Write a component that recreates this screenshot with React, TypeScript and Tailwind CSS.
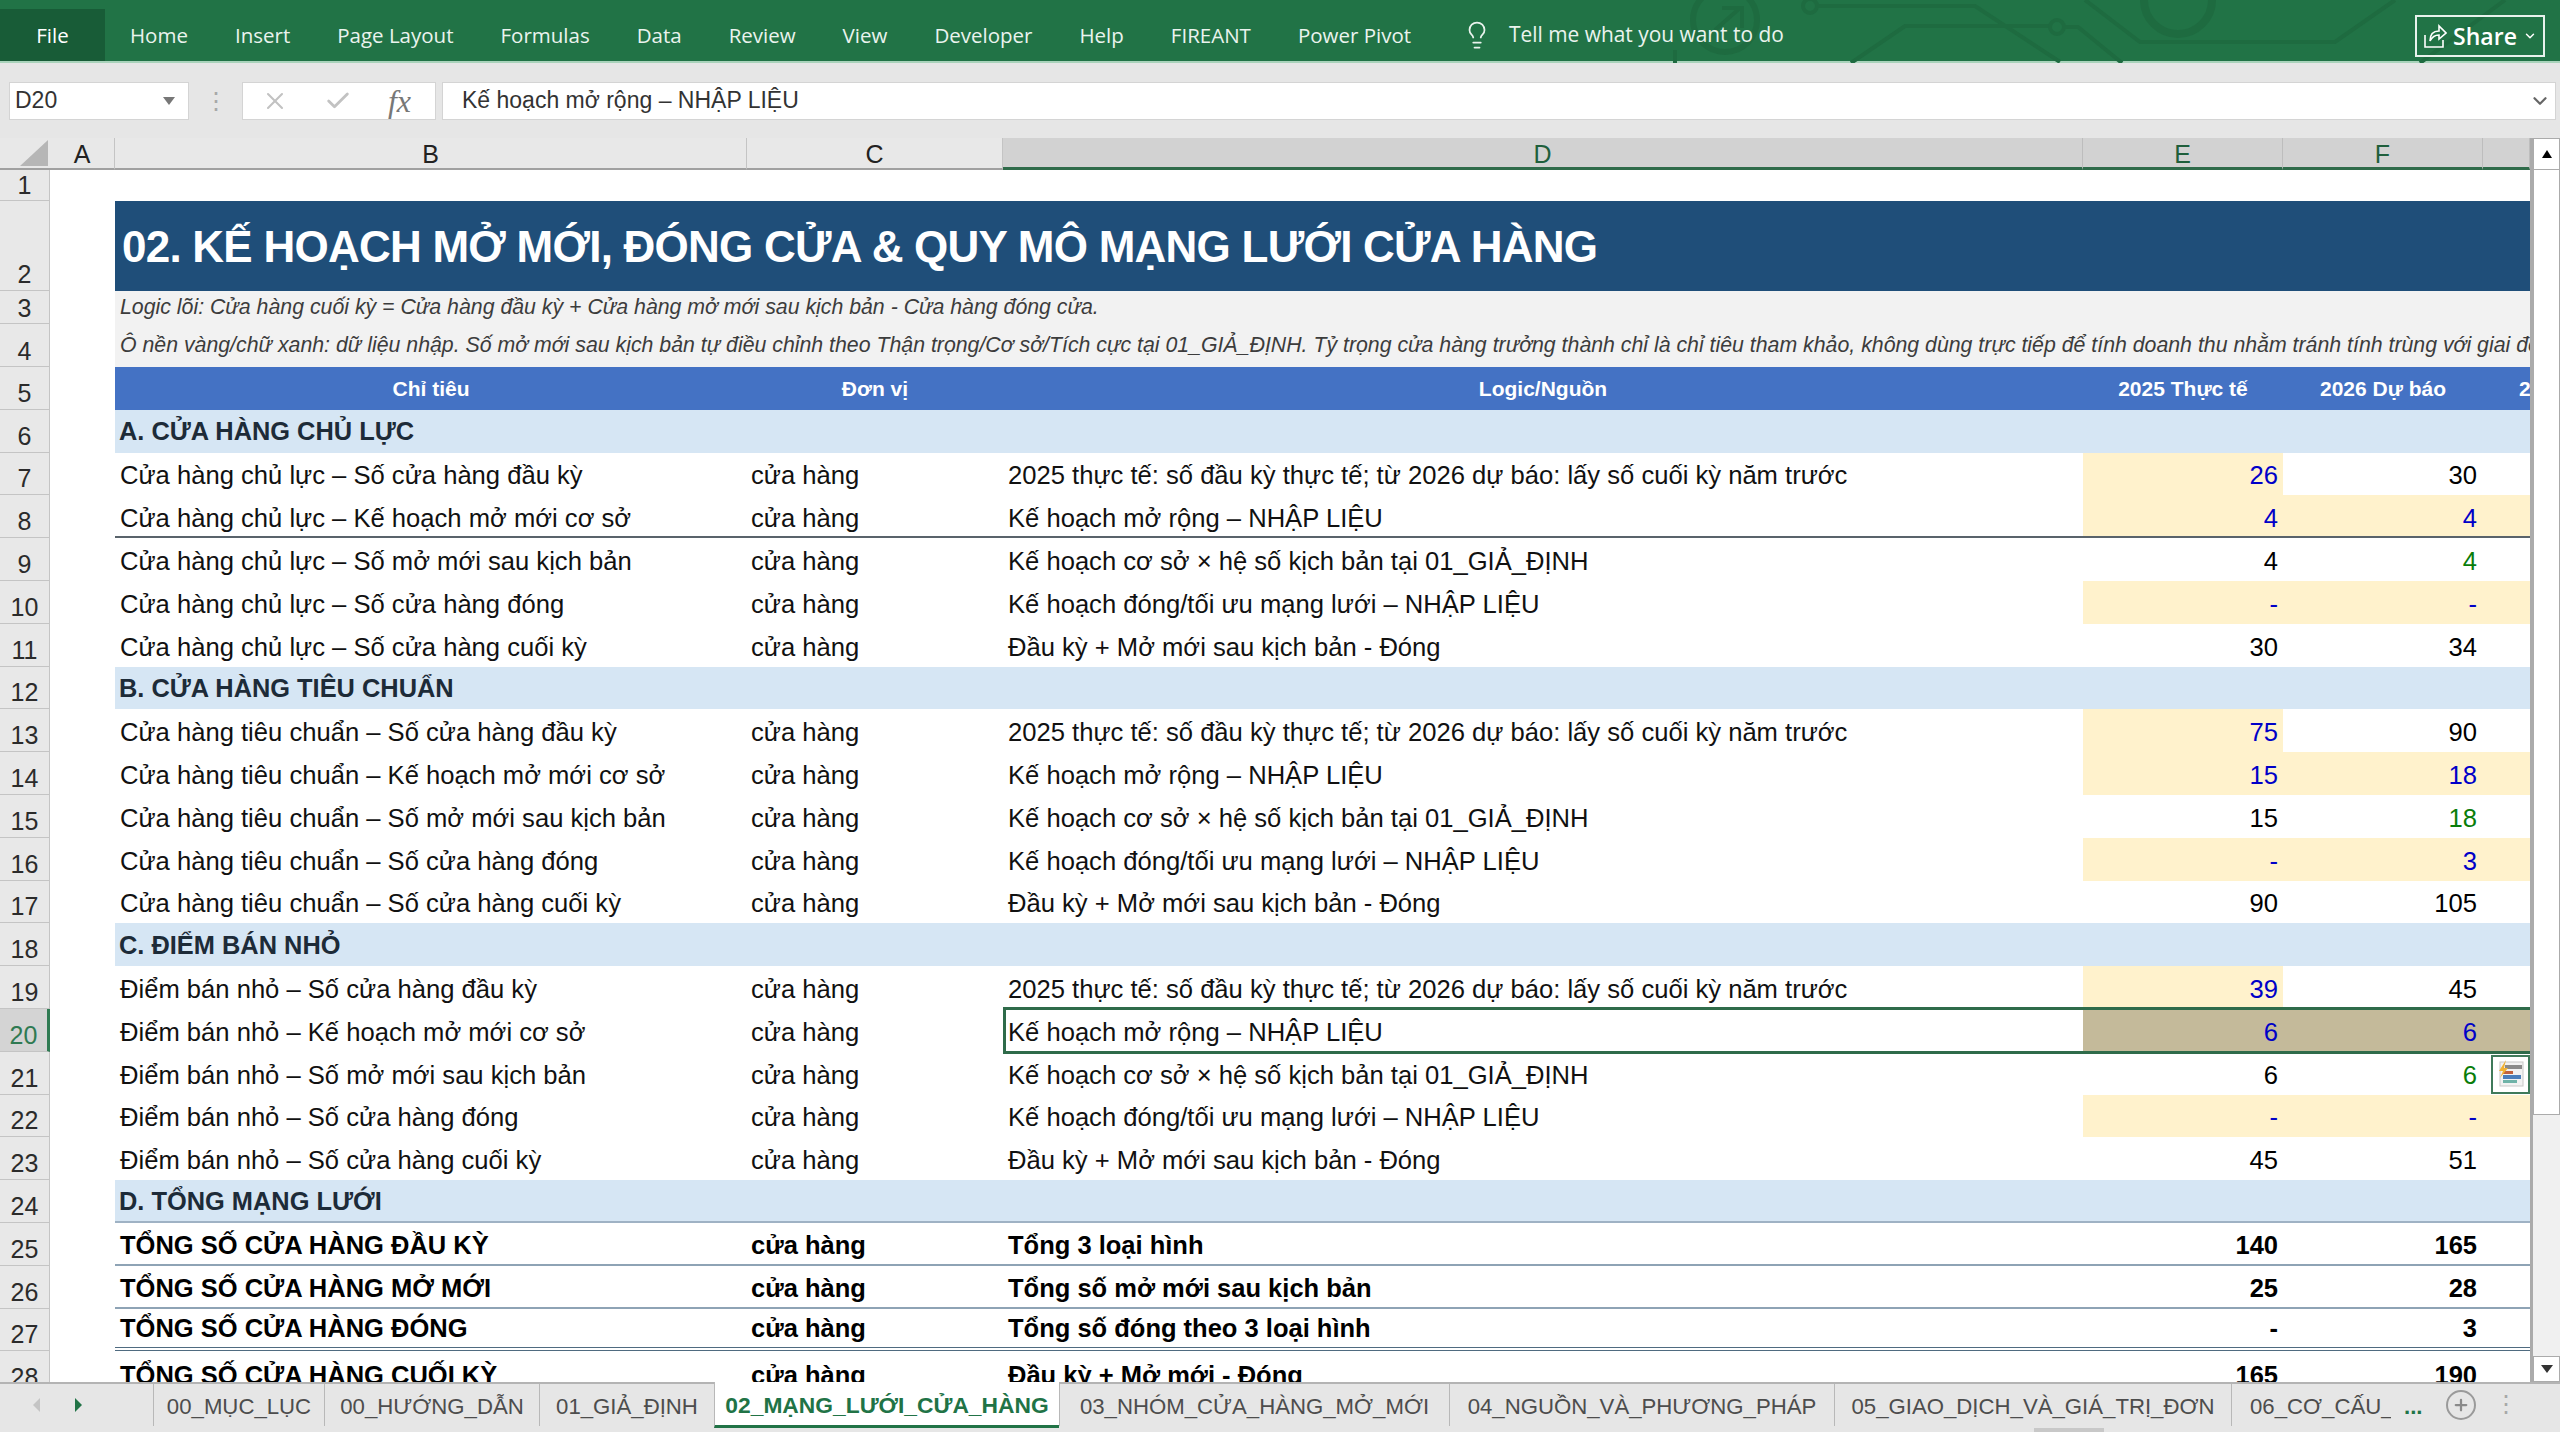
import React from "react";
import { Check, ChevronDown, Lightbulb, Plus, X } from "lucide-react";

type Val = { v: string; k?: "in" | "green" | "sel" };
type DataRow = { n: number; b: string; d: string; e: Val; f: Val; fill?: boolean };

const gridCols = "grid grid-cols-[50px_65px_632px_256px_1080px_200px_200px_47px]";
const rowH = "h-[42.8px] shrink-0";

const tabsRibbon = ["Home", "Insert", "Page Layout", "Formulas", "Data", "Review", "View", "Developer", "Help", "FIREANT", "Power Pivot"];

const sheetTabs = [
  { name: "00_MỤC_LỤC", w: "w-[171px]" },
  { name: "00_HƯỚNG_DẪN", w: "w-[215px]" },
  { name: "01_GIẢ_ĐỊNH", w: "w-[175px]" },
  { name: "02_MẠNG_LƯỚI_CỬA_HÀNG", w: "w-[345px]", active: true },
  { name: "03_NHÓM_CỬA_HÀNG_MỞ_MỚI", w: "w-[390px]" },
  { name: "04_NGUỒN_VÀ_PHƯƠNG_PHÁP", w: "w-[385px]" },
  { name: "05_GIAO_DỊCH_VÀ_GIÁ_TRỊ_ĐƠN", w: "w-[397px]" },
];

const group = (prefix: string, start: number, vals: [Val, Val][]): DataRow[] => [
  { n: start, b: `${prefix} – Số cửa hàng đầu kỳ`, d: "2025 thực tế: số đầu kỳ thực tế; từ 2026 dự báo: lấy số cuối kỳ năm trước", e: vals[0][0], f: vals[0][1] },
  { n: start + 1, b: `${prefix} – Kế hoạch mở mới cơ sở`, d: "Kế hoạch mở rộng – NHẬP LIỆU", e: vals[1][0], f: vals[1][1] },
  { n: start + 2, b: `${prefix} – Số mở mới sau kịch bản`, d: "Kế hoạch cơ sở × hệ số kịch bản tại 01_GIẢ_ĐỊNH", e: vals[2][0], f: vals[2][1] },
  { n: start + 3, b: `${prefix} – Số cửa hàng đóng`, d: "Kế hoạch đóng/tối ưu mạng lưới – NHẬP LIỆU", e: vals[3][0], f: vals[3][1] },
  { n: start + 4, b: `${prefix} – Số cửa hàng cuối kỳ`, d: "Đầu kỳ + Mở mới sau kịch bản - Đóng", e: vals[4][0], f: vals[4][1] },
];

const groupA = group("Cửa hàng chủ lực", 7, [
  [{ v: "26", k: "in" }, { v: "30" }],
  [{ v: "4", k: "in" }, { v: "4", k: "in" }],
  [{ v: "4" }, { v: "4", k: "green" }],
  [{ v: "-", k: "in" }, { v: "-", k: "in" }],
  [{ v: "30" }, { v: "34" }],
]);
const groupB = group("Cửa hàng tiêu chuẩn", 13, [
  [{ v: "75", k: "in" }, { v: "90" }],
  [{ v: "15", k: "in" }, { v: "18", k: "in" }],
  [{ v: "15" }, { v: "18", k: "green" }],
  [{ v: "-", k: "in" }, { v: "3", k: "in" }],
  [{ v: "90" }, { v: "105" }],
]);
const groupC = group("Điểm bán nhỏ", 19, [
  [{ v: "39", k: "in" }, { v: "45" }],
  [{ v: "6", k: "sel" }, { v: "6", k: "sel" }],
  [{ v: "6" }, { v: "6", k: "green" }],
  [{ v: "-", k: "in" }, { v: "-", k: "in" }],
  [{ v: "45" }, { v: "51" }],
]);

const totals = [
  { n: 25, b: "TỔNG SỐ CỬA HÀNG ĐẦU KỲ", d: "Tổng 3 loại hình", e: "140", f: "165", line: "border-b-2 border-[#8ea3b5]" },
  { n: 26, b: "TỔNG SỐ CỬA HÀNG MỞ MỚI", d: "Tổng số mở mới sau kịch bản", e: "25", f: "28", line: "border-b-2 border-[#8ea3b5]" },
  { n: 27, b: "TỔNG SỐ CỬA HÀNG ĐÓNG", d: "Tổng số đóng theo 3 loại hình", e: "-", f: "3", line: "border-b-[4px] border-double border-[#4f6b80]" },
  { n: 28, b: "TỔNG SỐ CỬA HÀNG CUỐI KỲ", d: "Đầu kỳ + Mở mới - Đóng", e: "165", f: "190", line: "" },
];

const valueBg = (k?: Val["k"]) => (k === "in" ? "bg-[#fff2cc]" : k === "sel" ? "bg-[#c4ba9a]" : "bg-white");
const valueText = (k?: Val["k"]) => (k === "in" || k === "sel" ? "text-[#0000c8]" : k === "green" ? "text-[#0a7d0a]" : "text-black");

const RowNum = ({ n, selected, className = "" }: { n: number; selected?: boolean; className?: string }) => (
  <div
    className={`flex items-end justify-center pb-[1px] font-normal text-[25px] leading-[30px] border-b border-[#c4c4c4] ${
      selected ? "bg-[#d4d4d4] text-[#2f7a52] border-r-[3px] border-r-[#2f7a52]" : "bg-[#e8e8e8] text-[#2b2b2b] border-r border-r-[#c4c4c4]"
    } ${className}`}
  >
    {n}
  </div>
);

const ValueCell = ({ val, pr }: { val: Val; pr: string }) => (
  <div className={`flex items-end justify-end pb-[5px] ${pr} ${valueBg(val.k)} ${valueText(val.k)}`}>{val.v}</div>
);

const BodyRow = ({ row }: { row: DataRow }) => {
  const selected = row.n === 20;
  return (
    <div className={`${gridCols} ${rowH} relative text-[25.6px] leading-[30px] text-[#111]`}>
      <RowNum n={row.n} selected={selected} />
      <div className="bg-white" />
      <div className="flex items-end pb-[5px] pl-[5px] whitespace-nowrap bg-white">{row.b}</div>
      <div className="flex items-end pb-[5px] pl-[4px] bg-white">cửa hàng</div>
      <div className="flex items-end pb-[5px] pl-[5px] whitespace-nowrap bg-white">{row.d}</div>
      <ValueCell val={row.e} pr="pr-[5px]" />
      <ValueCell val={row.f} pr="pr-[6px]" />
      <div className={row.f.k === "in" || row.f.k === "sel" ? valueBg(row.f.k) : "bg-white"} />
      {row.n === 8 && <div className="absolute left-[115px] right-0 bottom-0 h-[2px] bg-[#59636b]" />}
      {selected && <div className="absolute col-start-5 col-end-9 row-start-1 inset-x-0 top-[-2px] bottom-[-2px] border-[3px] border-r-0 border-[#2f6b4a] z-10" />}
      {row.n === 21 && (
        <div className="absolute right-0 top-[3px] w-[39px] h-[39px] border-2 border-[#3f7a5a] bg-white flex items-center justify-center z-10">
          <svg width="28" height="28" viewBox="0 0 28 28">
            <rect x="3" y="2" width="23" height="24" fill="#f2f2f2" stroke="#c8c8c8" />
            <rect x="8" y="5" width="17" height="4" fill="#8a8a8a" />
            <rect x="6" y="11" width="10" height="3" fill="#c0623f" />
            <rect x="6" y="15" width="18" height="4" fill="#4a7ebb" />
            <rect x="6" y="20" width="14" height="3" fill="#6fb3a8" />
            <path d="M9 0 L2 11 L6 11 L3 18 L11 8 L7 8 Z" fill="#f2b233" />
          </svg>
        </div>
      )}
    </div>
  );
};

const SectionRow = ({ n, title }: { n: number; title: string }) => (
  <div className={`${gridCols} ${rowH} text-[25.4px] leading-[30px] font-bold text-[#1d2b38]`}>
    <RowNum n={n} />
    <div className="bg-white" />
    <div className={`col-span-6 flex items-center pl-[4px] bg-[#d6e6f4] ${n === 24 ? "border-b-2 border-[#9fb2c4]" : ""}`}>{title}</div>
  </div>
);

const CircuitArt = () => (
  <svg className="absolute right-0 top-0 pointer-events-none" width="1000" height="63" viewBox="1560 0 1000 63" fill="none" stroke="#1e6b40" strokeWidth="4">
    <circle cx="1725" cy="20" r="32" strokeWidth="6" />
    <path d="M1715 30 L1740 8 M1722 8 H1742 V28" strokeWidth="4" />
    <circle cx="1810" cy="6" r="7" />
    <path d="M1817 6 H1975 L2060 62" />
    <path d="M1851 63 L1905 26 H2050" />
    <circle cx="2057" cy="27" r="7" />
    <path d="M2064 27 H2078 L2122 63" />
    <path d="M2085 0 L2140 42 H2335 L2395 0" />
    <circle cx="2178" cy="0" r="34" strokeWidth="8" />
    <path d="M2420 63 L2505 0" />
    <path d="M1675 63 V50" />
  </svg>
);

const App = () => (
  <div className="w-[2560px] h-[1432px] flex flex-col overflow-hidden bg-[#e6e6e6] font-['Liberation_Sans',sans-serif]">
    {/* ribbon */}
    <div className="relative h-[63px] shrink-0 bg-[#217346] border-b-2 border-[#a9d3bb] flex items-end text-white text-[20.5px] font-['Open_Sans',sans-serif]">
      <CircuitArt />
      <div className="w-[105px] h-[52px] bg-[#185c37] flex items-center justify-center">File</div>
      <div className="relative h-[52px] flex items-center gap-[47px] pl-[25px] text-[#eaf3ee]">
        {tabsRibbon.map((t) => (
          <span key={t}>{t}</span>
        ))}
        <span className="flex items-center gap-[17px] ml-[4px] text-[20.9px]">
          <Lightbulb size={30} strokeWidth={1.4} />
          <span>Tell me what you want to do</span>
        </span>
      </div>
      <div className="relative ml-auto mr-[15px] mb-[4px] w-[130px] h-[42px] border-2 border-[#e8f2ec] flex items-center justify-center gap-[6px] text-[23px] font-semibold">
        <svg width="24" height="26" viewBox="0 0 24 26" fill="none" stroke="white" strokeWidth="1.6">
          <path d="M2 12 V24 H20 V17" />
          <path d="M7 18 C7 11 11 8 16 8 V3 L23 10 L16 16 V12 C12 12 9 14 7 18 Z" />
        </svg>
        <span>Share</span>
        <ChevronDown size={14} strokeWidth={2.5} />
      </div>
    </div>

    {/* formula bar */}
    <div className="h-[75px] shrink-0 flex items-center bg-[#e6e6e6] pl-[9px] pr-[4px] text-[23px] text-[#333]">
      <div className="w-[180px] h-[38px] bg-white border border-[#d4d4d4] flex items-center justify-between pl-[5px] pr-[13px]">
        <span>D20</span>
        <span className="w-0 h-0 border-x-[6px] border-x-transparent border-t-[8px] border-t-[#777]" />
      </div>
      <div className="w-[53px] flex justify-center text-[#a8a8a8] text-[24px] leading-none">⋮</div>
      <div className="w-[194px] h-[38px] bg-white border border-[#d4d4d4] flex items-center justify-between pl-[18px] pr-[24px] text-[#c2c2c2]">
        <X size={28} strokeWidth={1.8} />
        <Check size={28} strokeWidth={2.4} />
        <span className="font-['Liberation_Serif',serif] italic text-[32px] leading-none text-[#777]">fx</span>
      </div>
      <div className="ml-[6px] flex-1 h-[38px] bg-white border border-[#d4d4d4] flex items-center justify-between pl-[19px] pr-[4px]">
        <span>Kế hoạch mở rộng – NHẬP LIỆU</span>
        <ChevronDown size={22} strokeWidth={2.4} className="text-[#666]" />
      </div>
    </div>

    {/* sheet */}
    <div className="flex-1 min-h-0 flex overflow-hidden bg-white">
      <div className="w-[2530px] shrink-0 flex flex-col overflow-hidden">
        <div className={`${gridCols} grid-rows-[32px] h-[32px] shrink-0 text-[25px] leading-[26px]`}>
          <div className="relative bg-[#e8e8e8] border-b-2 border-[#a0a0a0]">
            <svg className="absolute right-[2px] bottom-[2px]" width="28" height="26" viewBox="0 0 28 26">
              <path d="M28 0 V26 H0 Z" fill="#b6b6b6" />
            </svg>
          </div>
          {["A", "B", "C"].map((c) => (
            <div key={c} className="flex items-center justify-center pt-[2px] bg-[#e8e8e8] text-[#222] border-r border-[#c4c4c4] border-b-2 border-b-[#a0a0a0]">
              {c}
            </div>
          ))}
          {["D", "E", "F", ""].map((c, i) => (
            <div key={i} className="flex items-center justify-center pt-[2px] bg-[#d2d2d2] text-[#1f5f3c] border-r border-[#bdbdbd] border-b-[3px] border-b-[#2f6b4a]">
              {c}
            </div>
          ))}
        </div>

        <div className={`${gridCols} h-[31px] shrink-0`}>
          <RowNum n={1} className="!items-center !pb-0" />
          <div className="col-span-7 bg-white" />
        </div>
        <div className={`${gridCols} h-[90px] shrink-0`}>
          <RowNum n={2} />
          <div className="bg-white" />
          <div className="col-span-6 flex items-center pl-[7px] pt-[2px] bg-[#1f4e79] text-white font-bold text-[44px] tracking-[-0.76px] whitespace-nowrap">
            02. KẾ HOẠCH MỞ MỚI, ĐÓNG CỬA &amp; QUY MÔ MẠNG LƯỚI CỬA HÀNG
          </div>
        </div>
        <div className={`${gridCols} h-[33px] shrink-0`}>
          <RowNum n={3} className="!pb-0" />
          <div className="bg-white" />
          <div className="col-span-6 flex items-center pl-[5px] bg-[#f2f2f2] italic text-[21.3px] text-[#3c3c3c] whitespace-nowrap overflow-hidden">
            Logic lõi: Cửa hàng cuối kỳ = Cửa hàng đầu kỳ + Cửa hàng mở mới sau kịch bản - Cửa hàng đóng cửa.
          </div>
        </div>
        <div className={`${gridCols} h-[43px] shrink-0`}>
          <RowNum n={4} className="!pb-0" />
          <div className="bg-white" />
          <div className="col-span-6 flex items-center pl-[5px] bg-[#f2f2f2] italic text-[21.3px] text-[#3c3c3c] whitespace-nowrap overflow-hidden">
            Ô nền vàng/chữ xanh: dữ liệu nhập. Số mở mới sau kịch bản tự điều chỉnh theo Thận trọng/Cơ sở/Tích cực tại 01_GIẢ_ĐỊNH. Tỷ trọng cửa hàng trưởng thành chỉ là chỉ tiêu tham khảo, không dùng trực tiếp để tính doanh thu nhằm tránh tính trùng với giai đoạn
          </div>
        </div>
        <div className={`${gridCols} ${rowH} text-[21px] font-bold text-white`}>
          <RowNum n={5} />
          <div className="bg-white" />
          {["Chỉ tiêu", "Đơn vị", "Logic/Nguồn", "2025 Thực tế", "2026 Dự báo"].map((h) => (
            <div key={h} className="flex items-center justify-center bg-[#4472c4] whitespace-nowrap">
              {h}
            </div>
          ))}
          <div className="flex items-center pl-[36px] bg-[#4472c4] overflow-hidden whitespace-nowrap">2027</div>
        </div>

        <SectionRow n={6} title="A. CỬA HÀNG CHỦ LỰC" />
        {groupA.map((r) => (
          <BodyRow key={r.n} row={r} />
        ))}
        <SectionRow n={12} title="B. CỬA HÀNG TIÊU CHUẨN" />
        {groupB.map((r) => (
          <BodyRow key={r.n} row={r} />
        ))}
        <SectionRow n={18} title="C. ĐIỂM BÁN NHỎ" />
        {groupC.map((r) => (
          <BodyRow key={r.n} row={r} />
        ))}
        <SectionRow n={24} title="D. TỔNG MẠNG LƯỚI" />
        {totals.map((r) => (
          <div key={r.n} className={`${gridCols} ${rowH} text-[25.5px] leading-[30px] font-bold text-black`}>
            <RowNum n={r.n} />
            <div className="bg-white" />
            <div className={`col-span-6 grid grid-cols-[632px_256px_1080px_200px_200px_47px] bg-white ${r.line}`}>
              <div className="flex items-end pb-[4px] pl-[5px] whitespace-nowrap">{r.b}</div>
              <div className="flex items-end pb-[4px] pl-[4px]">cửa hàng</div>
              <div className="flex items-end pb-[4px] pl-[5px]">{r.d}</div>
              <div className="flex items-end justify-end pb-[4px] pr-[5px]">{r.e}</div>
              <div className="flex items-end justify-end pb-[4px] pr-[6px]">{r.f}</div>
            </div>
          </div>
        ))}
      </div>

      {/* vertical scrollbar */}
      <div className="flex-1 flex flex-col bg-[#f0f0f0] border-l-[3px] border-[#ababab]">
        <div className="h-[32px] shrink-0 bg-white border border-[#ababab] flex items-center justify-center">
          <span className="w-0 h-0 border-x-[5px] border-x-transparent border-b-[8px] border-b-black" />
        </div>
        <div className="h-[945px] shrink-0 bg-white border border-[#ababab] border-t-0" />
        <div className="flex-1" />
        <div className="h-[26px] shrink-0 bg-white border border-[#ababab] flex items-center justify-center">
          <span className="w-0 h-0 border-x-[6px] border-x-transparent border-t-[8px] border-t-[#333]" />
        </div>
      </div>
    </div>

    {/* sheet tabs */}
    <div className="relative h-[50px] shrink-0 flex items-start bg-[#e6e6e6] border-t-2 border-[#b4b4b4] text-[22.2px] text-[#4d4d4d]">
      <div className="w-[153px] h-[42px] flex items-center pl-[33px] gap-[35px]">
        <span className="w-0 h-0 border-y-[7px] border-y-transparent border-r-[7px] border-r-[#c4c4c4]" />
        <span className="w-0 h-0 border-y-[7px] border-y-transparent border-l-[7px] border-l-[#217346]" />
      </div>
      {sheetTabs.map((t) => (
        <div
          key={t.name}
          className={`${t.w} h-[42px] shrink-0 flex items-center justify-center pt-[3px] whitespace-nowrap border-l border-[#b8b8b8] ${
            t.active ? "-mt-[2px] !h-[46px] bg-white border-b-[3px] border-b-[#217346] text-[#217346] font-bold !text-[22.8px]" : ""
          }`}
        >
          {t.name}
        </div>
      ))}
      <div className="w-[195px] h-[42px] shrink-0 flex items-center pt-[3px] border-l border-[#b8b8b8] pl-[18px] overflow-hidden whitespace-nowrap">
        <span className="w-[141px] overflow-hidden">06_CƠ_CẤU_SẢN</span>
        <span className="ml-[13px] text-[#217346] font-bold">...</span>
      </div>
      <div className="ml-[20px] mt-[6px] w-[30px] h-[30px] rounded-full border-2 border-[#9a9a9a] flex items-center justify-center text-[#8a8a8a]">
        <Plus size={18} strokeWidth={3} />
      </div>
      <div className="ml-[18px] mt-[8px] text-[#a8a8a8] text-[24px] leading-none">⋮</div>
      <div className="absolute left-[2034px] bottom-0 w-[70px] h-[4px] bg-[#c8c8c8]" />
    </div>
  </div>
);

export default App;
